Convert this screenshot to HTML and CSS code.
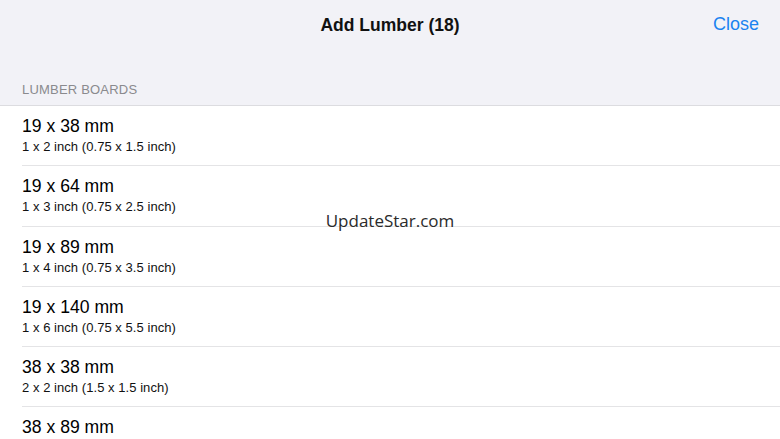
FILE: index.html
```html
<!DOCTYPE html>
<html>
<head>
<meta charset="utf-8">
<link rel="stylesheet" href="styles.css">
</head>
<body>
<div class="page">
  <header class="navbar">
    <div class="nav-title">Add Lumber (18)</div>
    <div class="nav-close">Close</div>
  </header>
  <div class="section-header">LUMBER BOARDS</div>
  <ul class="list">
    <li class="row"><div class="row-title">19 x 38 mm</div><div class="row-sub">1 x 2 inch (0.75 x 1.5 inch)</div></li>
    <li class="row"><div class="row-title">19 x 64 mm</div><div class="row-sub">1 x 3 inch (0.75 x 2.5 inch)</div></li>
    <li class="row"><div class="row-title">19 x 89 mm</div><div class="row-sub">1 x 4 inch (0.75 x 3.5 inch)</div></li>
    <li class="row"><div class="row-title">19 x 140 mm</div><div class="row-sub">1 x 6 inch (0.75 x 5.5 inch)</div></li>
    <li class="row"><div class="row-title">38 x 38 mm</div><div class="row-sub">2 x 2 inch (1.5 x 1.5 inch)</div></li>
    <li class="row"><div class="row-title">38 x 89 mm</div><div class="row-sub">2 x 4 inch (1.5 x 3.5 inch)</div></li>
  </ul>
  <div class="watermark">UpdateStar.com</div>
</div>
</body>
</html>
```
FILE: styles.css
```css
* { box-sizing: border-box; }
html, body { margin: 0; padding: 0; }
body {
  width: 780px;
  height: 439px;
  overflow: hidden;
  font-family: "Liberation Sans", Arial, sans-serif;
  background: #ffffff;
}
.page { position: relative; width: 780px; height: 439px; overflow: hidden; }
.navbar {
  position: relative;
  height: 48px;
  padding-top: 2px;
  background: #f2f2f7;
  display: flex;
  align-items: center;
  justify-content: center;
}
.nav-title {
  font-size: 17.5px;
  font-weight: 700;
  color: #111;
}
.nav-close {
  position: absolute;
  right: 21px;
  top: 14px;
  font-size: 18px;
  color: #1a83f0;
}
.section-header {
  height: 58px;
  background: #f2f2f7;
  padding: 34px 0 0 22px;
  font-size: 13px;
  color: #8a8a8e;
  letter-spacing: 0.2px;
  border-bottom: 1px solid #dcdce0;
}
.list { list-style: none; margin: 0; padding: 0 0 0 22px; }
.row {
  height: 60.25px;
  border-bottom: 1px solid #e4e4e6;
  padding-top: 10px;
}
.row-title { font-size: 17.6px; color: #000; line-height: 20px; }
.row-sub { font-size: 13px; color: #111; line-height: 16px; margin-top: 3px; letter-spacing: 0.05px; }
.watermark {
  position: absolute;
  left: 0; right: 0;
  top: 209px;
  text-align: center;
  font-family: "Open Sans", sans-serif;
  font-size: 17px;
  color: #2a2a2a;
}
```
